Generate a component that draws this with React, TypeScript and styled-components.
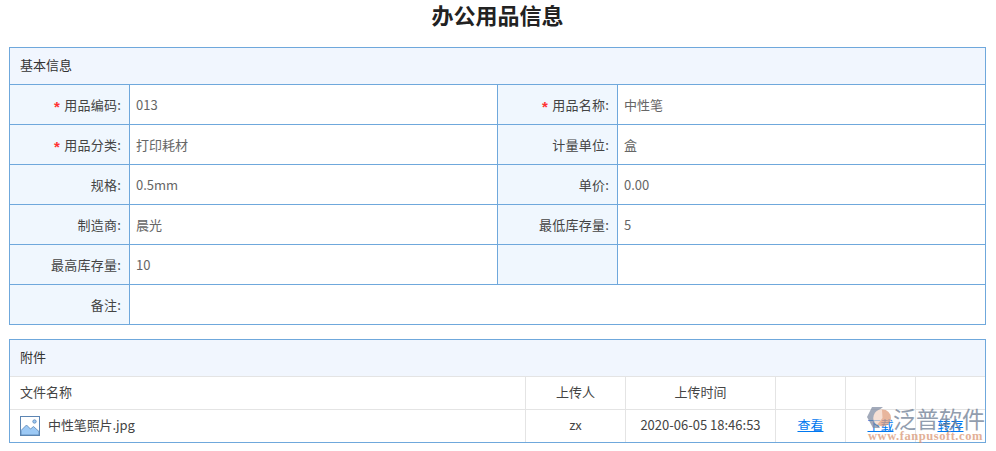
import React from "react";
import styled, { createGlobalStyle } from "styled-components";

const Global = createGlobalStyle`
  html, body { margin: 0; padding: 0; background: #fff; }
  body { font-family: "Noto Sans CJK SC", "Noto Sans", sans-serif; font-size: 13px; color: #333; }
`;
const Page = styled.div`
  position: relative;
  width: 996px;
  height: 451px;
  overflow: hidden;
  padding: 0 10px 0 9px;
  box-sizing: border-box;
`;
const Title = styled.h1`
  margin: 0;
  height: 47px;
  box-sizing: border-box;
  font-size: 22px;
  line-height: 28px;
  font-weight: 700;
  color: #222;
  text-align: center;
`;
const Panel = styled.section`
  border: 1px solid #6fa8dc;
  border-bottom: 0;
  width: 977px;
  box-sizing: border-box;
  margin-bottom: 14px;
`;
const PanelTitle = styled.div<{ $line: string }>`
  height: 37px;
  box-sizing: border-box;
  padding-left: 10px;
  line-height: 33px;
  background: #f1f6fe;
  color: #333;
  border-bottom: 1px solid ${(p) => p.$line};
`;
const FormGrid = styled.div`
  display: grid;
  grid-template-columns: 120px 368px 120px 1fr;
  grid-auto-rows: 40px;
`;
const Label = styled.div`
  background: #f0f7fe;
  border-right: 1px solid #6fa8dc;
  border-bottom: 1px solid #6fa8dc;
  box-sizing: border-box;
  display: flex;
  align-items: center;
  justify-content: flex-end;
  padding-right: 8px;
  letter-spacing: 0.25px;
  color: #444;
`;
const Star = styled.span`
  color: #f33;
  margin-right: 4px;
  font-family: "Liberation Sans", sans-serif;
  font-weight: 700;
  font-size: 15px;
  line-height: 13px;
  height: 9px;
`;
const Value = styled.div<{ $wide?: boolean; $last?: boolean }>`
  border-right: ${(p) => (p.$last || p.$wide ? "0" : "1px solid #6fa8dc")};
  border-bottom: 1px solid #6fa8dc;
  box-sizing: border-box;
  display: flex;
  align-items: center;
  padding-left: 6px;
  color: #666;
  ${(p) => (p.$wide ? "grid-column: span 3;" : "")}
`;
const FileGrid = styled.div`
  display: grid;
  grid-template-columns: 516px 100px 150px 70px 70px 1fr;
  border-bottom: 1px solid #6fa8dc;
`;
const Cell = styled.div<{ $center?: boolean; $head?: boolean; $last?: boolean }>`
  height: ${(p) => (p.$head ? "33px" : "32px")};
  box-sizing: border-box;
  display: flex;
  align-items: center;
  gap: 8px;
  padding-left: ${(p) => (p.$center ? "0" : "10px")};
  padding-bottom: 4px;
  justify-content: ${(p) => (p.$center ? "center" : "flex-start")};
  border-right: ${(p) => (p.$last ? "0" : "1px solid #e4e4e4")};
  border-bottom: ${(p) => (p.$head ? "1px solid #e4e4e4" : "0")};
  color: #444;
`;
const FileName = styled.span`
  letter-spacing: -0.1px;
`;
const FileLink = styled.a`
  color: #0078f0;
  text-decoration: underline;
`;
const FileIcon = styled.svg`
  flex: none;
  margin-top: 4px;
`;
const Watermark = styled.div`
  position: absolute;
  left: 867px;
  top: 405px;
  width: 121px;
  height: 40px;
  opacity: 0.72;
  pointer-events: none;
`;
const WmName = styled.span`
  position: absolute;
  left: 26px;
  top: 0;
  font-size: 23px;
  line-height: 26px;
  color: #68788f;
  white-space: nowrap;
`;
const WmUrl = styled.span`
  position: absolute;
  left: 1px;
  top: 25px;
  font-family: "Liberation Serif", serif;
  font-weight: 700;
  font-size: 12.5px;
  line-height: 12px;
  letter-spacing: 0.55px;
  color: #d8926f;
  white-space: nowrap;
`;
const WmLogo = styled.svg`
  position: absolute;
  left: 0;
  top: 1px;
`;

const ImageIcon = () => (
  <FileIcon width="20" height="20" viewBox="0 0 20 20" aria-hidden="true">
    <rect x="0.5" y="0.5" width="19" height="19" fill="#fff" stroke="#5c85b3" />
    <path d="M1 19V14.5L6.5 9L10.5 13L13.5 10.5L19 15.5V19Z" fill="#9cc9f5" stroke="#5c85b3" strokeWidth="0.8" />
    <circle cx="14.5" cy="5.5" r="1.7" fill="#9cc9f5" stroke="#5c85b3" strokeWidth="0.8" />
  </FileIcon>
);

const rows: [string, boolean, string, string, boolean, string][] = [
  ["用品编码:", true, "013", "用品名称:", true, "中性笔"],
  ["用品分类:", true, "打印耗材", "计量单位:", false, "盒"],
  ["规格:", false, "0.5mm", "单价:", false, "0.00"],
  ["制造商:", false, "晨光", "最低库存量:", false, "5"],
  ["最高库存量:", false, "10", "", false, ""],
];

export default function App() {
  return (
    <Page>
      <Global />
      <Title>办公用品信息</Title>
      <Panel>
        <PanelTitle $line="#6fa8dc">基本信息</PanelTitle>
        <FormGrid>
          {rows.map((r) => (
            <React.Fragment key={r[0]}>
              <Label>
                {r[1] && <Star>*</Star>}
                {r[0]}
              </Label>
              <Value>{r[2]}</Value>
              <Label>
                {r[4] && <Star>*</Star>}
                {r[3]}
              </Label>
              <Value $last>{r[5]}</Value>
            </React.Fragment>
          ))}
          <Label>备注:</Label>
          <Value $wide />
        </FormGrid>
      </Panel>
      <Panel>
        <PanelTitle $line="#e4e4e4">附件</PanelTitle>
        <FileGrid>
          <Cell $head>文件名称</Cell>
          <Cell $head $center>上传人</Cell>
          <Cell $head $center>上传时间</Cell>
          <Cell $head />
          <Cell $head />
          <Cell $head $last />
          <Cell>
            <ImageIcon />
            <FileName>中性笔照片.jpg</FileName>
          </Cell>
          <Cell $center>zx</Cell>
          <Cell $center>2020-06-05 18:46:53</Cell>
          <Cell $center><FileLink>查看</FileLink></Cell>
          <Cell $center><FileLink>下载</FileLink></Cell>
          <Cell $center $last><FileLink>转存</FileLink></Cell>
        </FileGrid>
      </Panel>
      <Watermark>
        <WmLogo width="26" height="24" viewBox="0 0 26 24" aria-hidden="true">
          <path d="M5 1H16L11 5L8 11L11 19L13 22H6L0 11Z" fill="#7f8aa0" />
          <circle cx="15.5" cy="12" r="8.5" fill="#e09a78" />
          <path d="M15 3.5A8.5 8.5 0 0 0 10 19L15.5 12Z" fill="#f3d5c5" />
        </WmLogo>
        <WmName>泛普软件</WmName>
        <WmUrl>www.fanpusoft.com</WmUrl>
      </Watermark>
    </Page>
  );
}
